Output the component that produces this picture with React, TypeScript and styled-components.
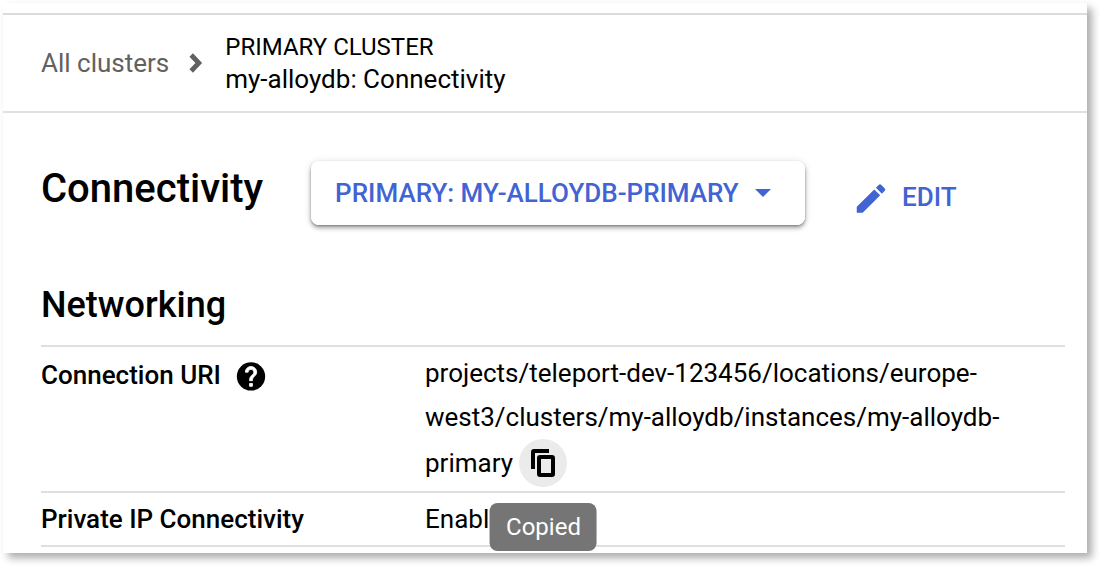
import React from "react";
import styled, { createGlobalStyle } from "styled-components";

const GlobalStyle = createGlobalStyle`
  *, *::before, *::after { box-sizing: border-box; }
  body {
    margin: 0;
    background: #fff;
    color: #000;
    font-family: Roboto, "Liberation Sans", sans-serif;
    font-size: 26px;
    line-height: 44px;
  }
  button, select { font: inherit; color: inherit; border: 0; background: none; cursor: pointer; }
`;

const Page = styled.div`
  padding: 3px 13px 13px 3px;
`;

const Panel = styled.div`
  background: #fff;
  padding: 10px 0 6px;
  box-shadow: 5px 5px 8px rgba(0, 0, 0, 0.33);
`;

const Header = styled.header`
  border-top: 2px solid #dadce0;
  border-bottom: 2px solid #e0e0e0;
  padding: 16px 38px;
`;

const Breadcrumb = styled.nav`
  display: flex;
  align-items: center;
  line-height: 32px;
`;

const CrumbLink = styled.a`
  color: #616161;
  text-decoration: none;
`;

const CrumbChevron = styled.svg`
  width: 14px;
  height: 22px;
  margin: 0 22px 0 20px;
  flex: none;
`;

const CrumbKind = styled.div`
  font-size: 24px;
`;

const Main = styled.main`
  padding: 48px 22px 0 38px;
`;

const TitleRow = styled.div`
  display: flex;
  align-items: baseline;
  margin-bottom: 56px;
  color: #4263d3;
  font-weight: 500;
`;

const Title = styled.h1`
  margin: 0 48px 0 0;
  color: #000;
  font-size: 40px;
  font-weight: 500;
  line-height: 48px;
`;

const Picker = styled.div`
  position: relative;
  display: flex;
  margin-right: 47px;
  border-radius: 8px;
  box-shadow: 0 3px 4px rgba(0, 0, 0, 0.3), 0 1px 2px rgba(0, 0, 0, 0.25),
    0 1px 8px rgba(0, 0, 0, 0.12);
`;

const InstanceSelect = styled.select`
  appearance: none;
  height: 64px;
  padding: 0 66px 0 24px;
  border-radius: 8px;
  background: #fff;
`;

const Caret = styled.svg`
  position: absolute;
  top: 28px;
  right: 34px;
  width: 16px;
  height: 8px;
  pointer-events: none;
`;

const EditButton = styled.button`
  display: flex;
  align-items: center;
  align-self: flex-end;
  gap: 12px;
  height: 56px;
  padding: 0;
  font-weight: 500;
`;

const EditIcon = styled.svg`
  width: 38px;
  height: 38px;
`;

const SectionTitle = styled.h2`
  margin: 0 0 16px;
  font-size: 36px;
  font-weight: 500;
  line-height: 48px;
`;

const Details = styled.table`
  width: 100%;
  border-collapse: collapse;
  table-layout: fixed;
  border-top: 2px solid #e0e0e0;
`;

const Row = styled.tr`
  border-bottom: 2px solid #e0e0e0;
`;

const Name = styled.th`
  width: 37.5%;
  padding: 4px 0;
  font-weight: 500;
  text-align: left;
  vertical-align: top;
`;

const NameWithHelp = styled.div`
  display: flex;
  align-items: center;
  gap: 13px;
  height: 48px;
`;

const HelpButton = styled.button`
  display: flex;
  padding: 0;
`;

const HelpIcon = styled.svg`
  width: 34px;
  height: 34px;
`;

const Value = styled.td`
  padding: 4px 0;
  vertical-align: top;
`;

const CopyAnchor = styled.span`
  position: relative;
  display: inline-block;
  height: 48px;
  vertical-align: -5px;
`;

const CopyButton = styled.button`
  display: flex;
  align-items: center;
  justify-content: center;
  width: 48px;
  height: 48px;
  padding: 0;
  border-radius: 50%;
  background: #ebebeb;
`;

const CopyIcon = styled.svg`
  width: 24px;
  height: 28px;
`;

const Tooltip = styled.span`
  position: absolute;
  top: 64px;
  left: 50%;
  transform: translateX(-50%);
  padding: 0 16px;
  border-radius: 8px;
  background: #757575;
  color: #fff;
  font-size: 24px;
  line-height: 48px;
`;

export default function App() {
  return (
    <>
      <GlobalStyle />
      <Page>
        <Panel>
          <Header>
            <Breadcrumb aria-label="Breadcrumb">
              <CrumbLink href="#clusters">All clusters</CrumbLink>
              <CrumbChevron viewBox="0 0 14 22" aria-hidden="true">
                <path d="M2.2 3l7.6 8-7.6 8" fill="none" stroke="#616161" strokeWidth="4.8" />
              </CrumbChevron>
              <div>
                <CrumbKind>PRIMARY CLUSTER</CrumbKind>
                <div>my-alloydb: Connectivity</div>
              </div>
            </Breadcrumb>
          </Header>
          <Main>
            <TitleRow>
              <Title>Connectivity</Title>
              <Picker>
                <InstanceSelect aria-label="Instance">
                  <option>PRIMARY: MY-ALLOYDB-PRIMARY</option>
                </InstanceSelect>
                <Caret viewBox="0 0 16 8" aria-hidden="true">
                  <path d="M0 0h16L8 8z" fill="currentColor" />
                </Caret>
              </Picker>
              <EditButton type="button">
                <EditIcon viewBox="0 0 24 24" aria-hidden="true">
                  <path
                    d="M3 18.2V22h3.75L17.81 10.94l-3.75-3.75L3 18.2zM20.71 8.04a1 1 0 0 0 0-1.41l-2.34-2.34a1 1 0 0 0-1.41 0l-1.83 1.83 3.75 3.75 1.83-1.83z"
                    fill="currentColor"
                  />
                </EditIcon>
                EDIT
              </EditButton>
            </TitleRow>
            <SectionTitle>Networking</SectionTitle>
            <Details>
              <tbody>
                <Row>
                  <Name scope="row">
                    <NameWithHelp>
                      Connection URI
                      <HelpButton type="button" aria-label="About the connection URI">
                        <HelpIcon viewBox="0 0 24 24" aria-hidden="true">
                          <circle cx="12" cy="13" r="10" fill="currentColor" />
                          <path
                            d="M13 20h-2v-2h2v2zm2.07-7.75l-.9.92C13.45 13.9 13 14.5 13 16h-2v-.5c0-1.1.45-2.1 1.17-2.83l1.24-1.26c.37-.36.59-.86.59-1.41 0-1.1-.9-2-2-2s-2 .9-2 2H8c0-2.21 1.79-4 4-4s4 1.79 4 4c0 .88-.36 1.68-.93 2.25z"
                            fill="#fff"
                            stroke="#fff"
                            strokeWidth="0.6"
                          />
                        </HelpIcon>
                      </HelpButton>
                    </NameWithHelp>
                  </Name>
                  <Value>
                    projects/teleport-dev-123456/locations/europe-west3/clusters/my-alloydb/instances/my-alloydb-primary{" "}
                    <CopyAnchor>
                      <CopyButton type="button" aria-label="Copy connection URI">
                        <CopyIcon viewBox="0 0 24 28" aria-hidden="true">
                          <path
                            d="M18 0H3a3 3 0 0 0-3 3v17h4V4h14z"
                            fill="currentColor"
                          />
                          <rect
                            x="8"
                            y="8"
                            width="14"
                            height="18"
                            rx="1"
                            fill="none"
                            stroke="currentColor"
                            strokeWidth="4"
                          />
                        </CopyIcon>
                      </CopyButton>
                      <Tooltip role="status">Copied</Tooltip>
                    </CopyAnchor>
                  </Value>
                </Row>
                <Row>
                  <Name scope="row">Private IP Connectivity</Name>
                  <Value>Enabled</Value>
                </Row>
              </tbody>
            </Details>
          </Main>
        </Panel>
      </Page>
    </>
  );
}
